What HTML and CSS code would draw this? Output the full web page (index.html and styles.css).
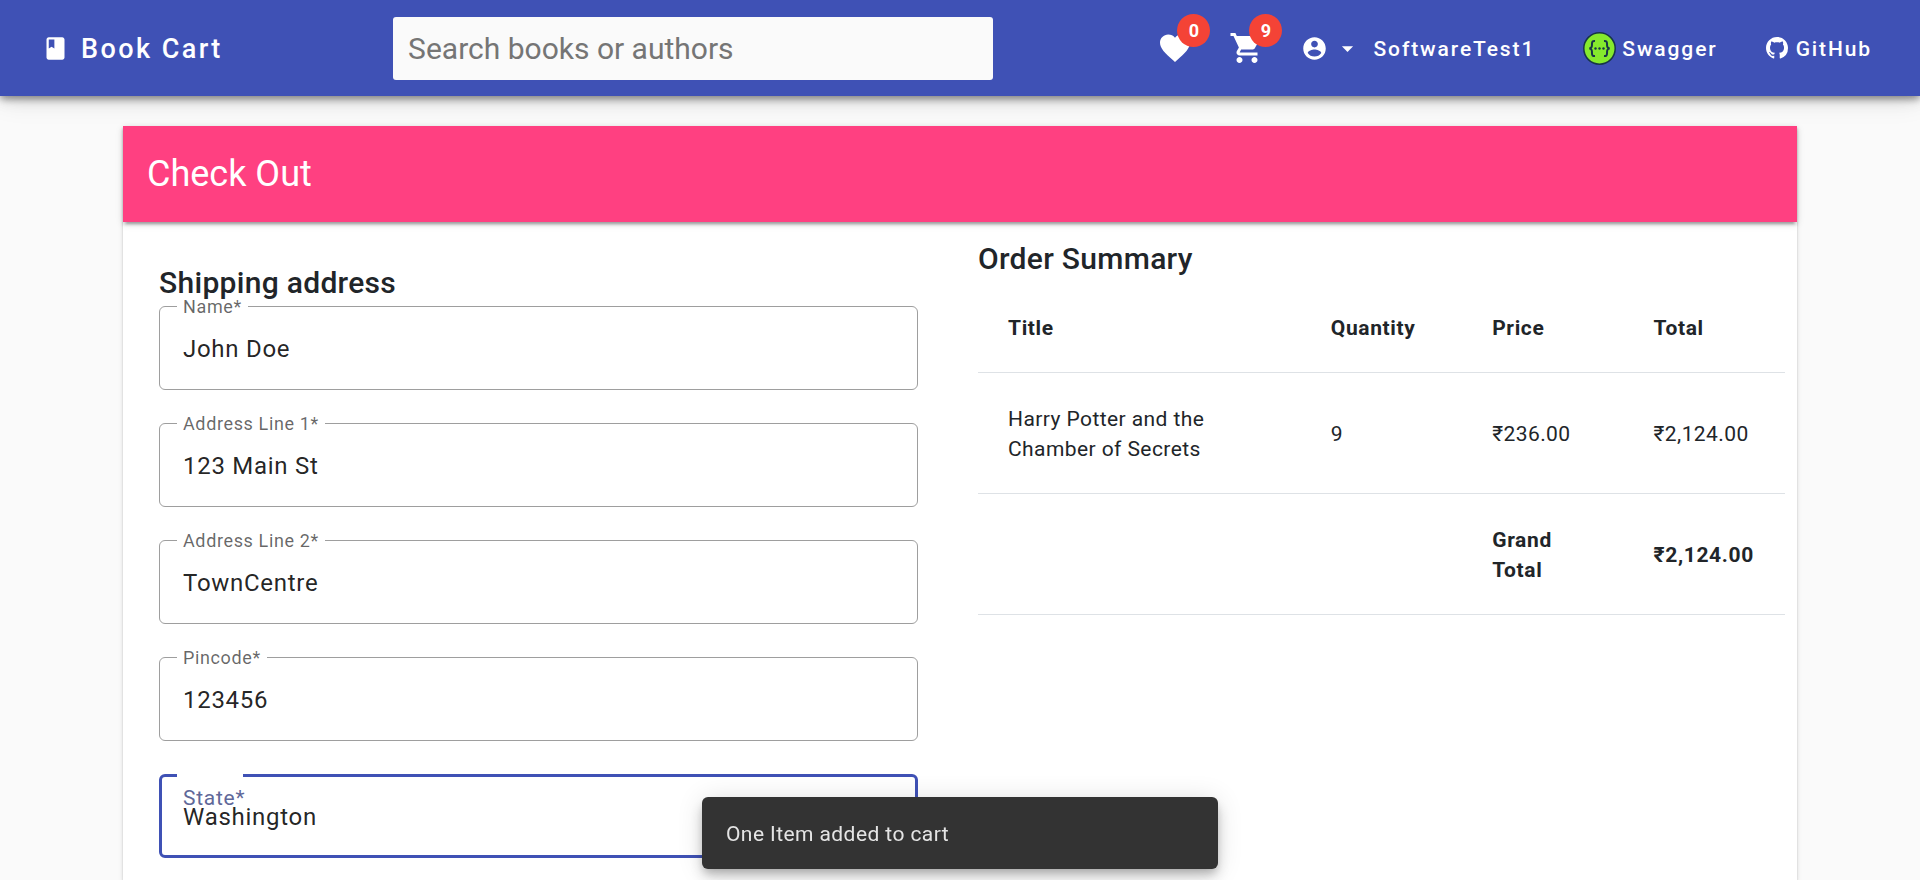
FILE: index.html
```html
<!DOCTYPE html>
<html lang="en">
<head>
<meta charset="utf-8">
<meta name="viewport" content="width=device-width, initial-scale=1">
<title>Book Cart</title>
<link rel="stylesheet" href="styles.css">
</head>
<body>
<header class="toolbar">
  <a class="brand" href="#">
    <svg class="icon" viewBox="0 0 24 24" aria-hidden="true"><path d="M18 2H6c-1.100 0-2 .9-2 2v16c0 1.100.9 2 2 2h12c1.100 0 2-.9 2-2V4c0-1.100-.9-2-2-2zM6 4h5v8l-2.500-1.500L6 12V4z"/></svg>
    <span>Book Cart</span>
  </a>
  <input class="search" type="search" placeholder="Search books or authors" aria-label="Search books or authors">
  <nav class="actions">
    <button class="icon-button" type="button" aria-label="Wishlist">
      <svg class="icon-large" viewBox="0 0 24 24" aria-hidden="true"><path d="M12 21.350l-1.450-1.320C5.400 15.360 2 12.280 2 8.500 2 5.420 4.420 3 7.500 3c1.740 0 3.410.81 4.500 2.090C13.090 3.810 14.760 3 16.500 3 19.580 3 22 5.420 22 8.500c0 3.780-3.400 6.860-8.550 11.540L12 21.350z"/></svg>
      <span class="badge">0</span>
    </button>
    <button class="icon-button" type="button" aria-label="Shopping cart">
      <svg class="icon-large" viewBox="0 0 24 24" aria-hidden="true"><path d="M7 18c-1.100 0-1.990.9-1.990 2S5.900 22 7 22s2-.9 2-2-.9-2-2-2zM1 2v2h2l3.600 7.590-1.350 2.450c-.16.28-.25.61-.25.96 0 1.100.9 2 2 2h12v-2H7.420c-.14 0-.25-.11-.25-.25l.03-.12.9-1.630h7.450c.75 0 1.410-.41 1.750-1.030l3.580-6.490c.08-.14.12-.31.12-.48 0-.55-.45-1-1-1H5.210l-.94-2H1zm16 16c-1.100 0-1.990.9-1.990 2s.89 2 1.990 2 2-.9 2-2-.9-2-2-2z"/></svg>
      <span class="badge">9</span>
    </button>
    <button class="user" type="button">
      <svg class="icon" viewBox="0 0 24 24" aria-hidden="true"><path d="M12 2C6.480 2 2 6.480 2 12s4.480 10 10 10 10-4.480 10-10S17.520 2 12 2zm0 3c1.660 0 3 1.340 3 3s-1.340 3-3 3-3-1.340-3-3 1.340-3 3-3zm0 14.200c-2.500 0-4.710-1.280-6-3.220.03-1.990 4-3.080 6-3.080 1.990 0 5.970 1.090 6 3.080-1.290 1.940-3.500 3.220-6 3.220z"/></svg>
      <svg class="icon" viewBox="0 0 24 24" aria-hidden="true"><path d="M7 10l5 5 5-5z"/></svg>
      <span class="user-name">SoftwareTest1</span>
    </button>
    <a class="link" href="#">
      <svg class="swagger" viewBox="0 0 33 33" aria-hidden="true">
        <circle class="swagger-disc" cx="16.500" cy="16.500" r="15.700"/>
        <path class="swagger-brace" d="M12 9c-2.400-.2-3 .8-3 2.600 0 2.800 0 4.400-2.600 4.900C9 17 9 18.600 9 21.400c0 1.800.6 2.800 3 2.600M21 9c2.400-.2 3 .8 3 2.600 0 2.800 0 4.400 2.600 4.900-2.600.5-2.600 2.100-2.600 4.900 0 1.800-.6 2.800-3 2.600"/>
        <g class="swagger-dots"><circle cx="12.500" cy="16.500" r="1.200"/><circle cx="16.500" cy="16.500" r="1.200"/><circle cx="20.500" cy="16.500" r="1.200"/></g>
      </svg>
      <span>Swagger</span>
    </a>
    <a class="link link-github" href="#">
      <svg class="github" viewBox="0 0 16 16" aria-hidden="true"><path d="M8 0C3.580 0 0 3.580 0 8c0 3.540 2.290 6.530 5.470 7.590.4.070.55-.17.55-.38 0-.19-.01-.82-.01-1.490-2.010.37-2.530-.49-2.690-.94-.09-.23-.48-.94-.82-1.130-.28-.15-.68-.52-.01-.53.63-.01 1.080.58 1.230.82.72 1.210 1.870.87 2.330.66.07-.52.28-.87.51-1.070-1.780-.2-3.640-.89-3.640-3.950 0-.87.31-1.590.82-2.150-.08-.2-.36-1.020.08-2.120 0 0 .67-.21 2.200.82.64-.18 1.320-.27 2-.27s1.360.09 2 .27c1.530-1.040 2.200-.82 2.200-.82.44 1.100.16 1.920.08 2.120.51.56.82 1.270.82 2.150 0 3.070-1.870 3.750-3.650 3.950.29.25.54.73.54 1.480 0 1.070-.01 1.930-.01 2.200 0 .21.15.46.55.38A8.010 8.010 0 0016 8c0-4.420-3.580-8-8-8z"/></svg>
      <span>GitHub</span>
    </a>
  </nav>
</header>

<main class="page">
  <section class="card">
    <h1 class="card-title">Check Out</h1>
    <div class="columns">
      <form class="shipping">
        <h2 class="heading">Shipping address</h2>
        <div class="field"><label for="name">Name*</label><input id="name" type="text" value="John Doe"></div>
        <div class="field"><label for="line1">Address Line 1*</label><input id="line1" type="text" value="123 Main St"></div>
        <div class="field"><label for="line2">Address Line 2*</label><input id="line2" type="text" value="TownCentre"></div>
        <div class="field"><label for="pincode">Pincode*</label><input id="pincode" type="text" value="123456"></div>
        <div class="field field-active"><label for="state">State*</label><input id="state" type="text" value="Washington"></div>
      </form>
      <section class="summary">
        <h2 class="heading">Order Summary</h2>
        <table class="order">
          <colgroup><col class="col-title"><col><col><col></colgroup>
          <thead>
            <tr><th scope="col">Title</th><th scope="col">Quantity</th><th scope="col">Price</th><th scope="col">Total</th></tr>
          </thead>
          <tbody>
            <tr><td>Harry Potter and the Chamber of Secrets</td><td>9</td><td>₹236.00</td><td>₹2,124.00</td></tr>
          </tbody>
          <tfoot>
            <tr><td></td><td></td><th scope="row">Grand Total</th><th>₹2,124.00</th></tr>
          </tfoot>
        </table>
      </section>
    </div>
  </section>
</main>

<div class="snackbar" role="status">One Item added to cart</div>
</body>
</html>
```
FILE: styles.css
```css
* {
  box-sizing: border-box;
}

body {
  display: flex;
  flex-direction: column;
  min-height: 100vh;
  margin: 0;
  background: #fafafa;
  color: #212529;
  font-family: Roboto, "Liberation Sans", sans-serif;
  font-size: 21px;
  line-height: 30px;
}

button,
input {
  font-family: inherit;
}

button {
  padding: 0;
  border: 0;
  background: none;
  color: inherit;
  cursor: pointer;
}

svg {
  display: block;
  flex: none;
  fill: currentColor;
}

/* Toolbar */

.toolbar {
  position: relative;
  z-index: 1;
  display: flex;
  align-items: center;
  justify-content: space-between;
  height: 96px;
  padding: 0 24px;
  background: #3f51b5;
  color: #fff;
  box-shadow: 0 5px 8px -2px rgba(0, 0, 0, .2), 0 2px 15px rgba(0, 0, 0, .14), 0 2px 27px rgba(0, 0, 0, .12), 0 3px 6px rgba(0, 0, 0, .2);
}

.brand,
.link,
.user {
  display: flex;
  align-items: center;
  color: #fff;
  font-size: 21px;
  font-weight: 500;
  letter-spacing: .09em;
  text-decoration: none;
}

.brand span,
.link span,
.user-name {
  padding-top: 2px;
}

.brand {
  gap: 12px;
  padding: 0 24px 0 18px;
  font-size: 27px;
}

.icon {
  width: 27px;
  height: 27px;
}

.icon-large {
  width: 36px;
  height: 36px;
}

.search {
  width: 600px;
  height: 63px;
  padding: 0 15px;
  border: 0;
  border-radius: 3px;
  background: #fafafa;
  color: #212529;
  font-size: 30px;
}

.search::placeholder {
  color: #757575;
}

.actions {
  display: flex;
  align-items: center;
}

.icon-button {
  position: relative;
  display: flex;
  justify-content: center;
  width: 72px;
}

.badge {
  position: absolute;
  top: -16px;
  right: 1px;
  width: 33px;
  height: 33px;
  border-radius: 50%;
  background: #f44336;
  font-size: 18px;
  font-weight: 700;
  line-height: 33px;
  text-align: center;
}

.user {
  gap: 6px;
  padding: 0 24px 0 18px;
}

.user-name {
  padding-left: 6px;
}

.link {
  gap: 6px;
  padding: 0 24px;
}

.link-github {
  gap: 8px;
}

.swagger {
  width: 33px;
  height: 33px;
}

.swagger-disc {
  fill: #85ea2d;
  stroke: #173647;
  stroke-width: 1.500;
}

.swagger-brace {
  fill: none;
  stroke: #173647;
  stroke-width: 2;
}

.swagger-dots {
  fill: #173647;
}

.github {
  width: 22px;
  height: 22px;
}

/* Check-out card */

.page {
  display: flex;
  flex: 1;
  padding: 30px 123px 0;
}

.card {
  flex: 1;
  background: #fff;
  box-shadow: 0 3px 2px -2px rgba(0, 0, 0, .2), 0 2px 2px rgba(0, 0, 0, .14), 0 2px 5px rgba(0, 0, 0, .12);
}

.card-title {
  margin: 0;
  padding: 1px 24px 0;
  background: #ff4081;
  color: #fff;
  font-size: 36px;
  font-weight: 400;
  line-height: 95px;
  box-shadow: 0 5px 2px -3px rgba(0, 0, 0, .2), 0 3px 3px rgba(0, 0, 0, .14), 0 2px 8px rgba(0, 0, 0, .12);
}

.columns {
  display: grid;
  grid-template-columns: 1fr 1fr;
}

.shipping {
  display: flex;
  flex-direction: column;
  padding: 43px 42px 0 36px;
}

.summary {
  padding: 19px 12px 0 18px;
}

.heading {
  margin: 0;
  font-size: 30px;
  font-weight: 500;
  line-height: 36px;
  letter-spacing: .01em;
}

.shipping .heading {
  margin-bottom: 5px;
}

.field {
  position: relative;
  margin-bottom: 33px;
}

.field:last-child {
  margin-bottom: 0;
}

.field input {
  display: block;
  width: 100%;
  height: 84px;
  padding: 2px 23px 0;
  border: 1px solid #9e9e9e;
  border-radius: 6px;
  outline: 0;
  background: transparent;
  color: rgba(0, 0, 0, .87);
  font-size: 24px;
  letter-spacing: .03em;
}

/* Floating label, with the gap it leaves in the outline */
.field label {
  position: absolute;
  z-index: 1;
  top: -10px;
  left: 24px;
  color: rgba(0, 0, 0, .6);
  font-size: 18px;
  line-height: 21px;
  letter-spacing: .035em;
}

.field label::before {
  content: "";
  position: absolute;
  z-index: -1;
  top: 10px;
  left: -6px;
  right: -6px;
  height: 3px;
  background: #fff;
}

.field .field-label {
  top: 0;
}

.field-active input {
  padding: 2px 21px 0;
  border: 3px solid #3f51b5;
}

.field-active label {
  top: 12px;
  color: #5f6899;
  font-size: 21px;
  line-height: 24px;
}

.field-active label::before {
  top: -12px;
  right: 2px;
}

.order {
  width: 100%;
  margin-top: 5px;
  border-collapse: collapse;
  table-layout: fixed;
  letter-spacing: .02em;
}

.col-title {
  width: 40%;
}

.order th,
.order td {
  padding: 31px 0 29px 30px;
  border-bottom: 1px solid #dee2e6;
  text-align: left;
  vertical-align: middle;
}

.order td:first-child,
.order tfoot th:nth-child(3) {
  padding-right: 30px;
}

.order th {
  font-weight: 700;
  letter-spacing: .03em;
}

/* Notification */

.snackbar {
  position: fixed;
  z-index: 2;
  bottom: 11px;
  left: 50%;
  width: 516px;
  margin-left: -258px;
  padding: 22px 24px 20px;
  border-radius: 6px;
  background: #333;
  color: rgba(255, 255, 255, .87);
  letter-spacing: .02em;
  box-shadow: 0 5px 8px -2px rgba(0, 0, 0, .2), 0 9px 15px rgba(0, 0, 0, .14), 0 2px 27px rgba(0, 0, 0, .12);
}
```
